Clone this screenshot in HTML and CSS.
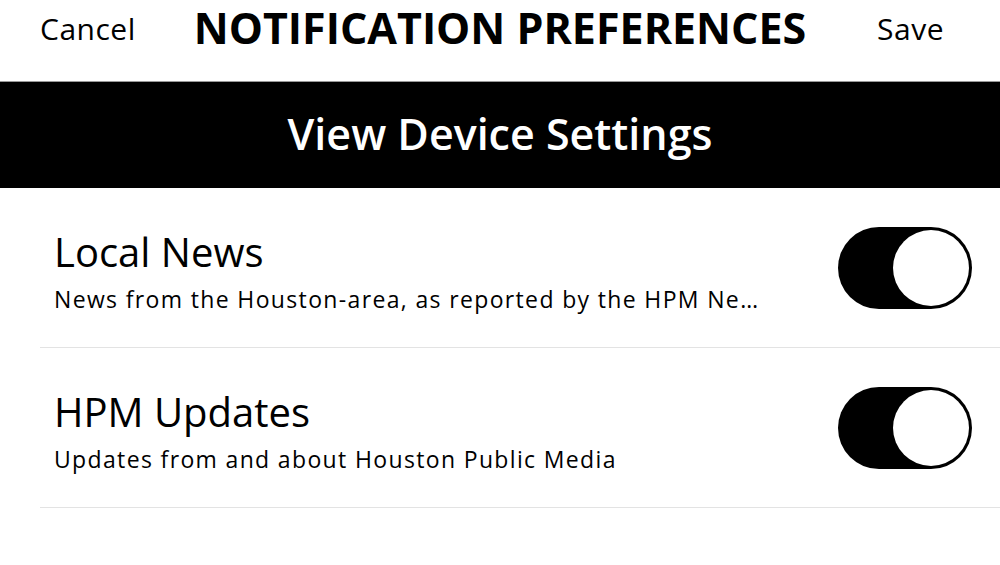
FILE: index.html
```html
<!DOCTYPE html>
<html>
<head>
<meta charset="utf-8">
<link rel="stylesheet" href="styles.css">
</head>
<body>
<header class="nav">
  <span class="nav-btn cancel">Cancel</span>
  <h1 class="nav-title">NOTIFICATION PREFERENCES</h1>
  <span class="nav-btn save">Save</span>
</header>
<div class="device-bar">View Device Settings</div>
<ul class="list">
  <li class="row">
    <div class="row-text">
      <div class="row-title">Local News</div>
      <div class="row-sub">News from the Houston-area, as reported by the HPM Ne…</div>
    </div>
    <div class="toggle on"><span class="knob"></span></div>
  </li>
  <li class="row">
    <div class="row-text">
      <div class="row-title">HPM Updates</div>
      <div class="row-sub">Updates from and about Houston Public Media</div>
    </div>
    <div class="toggle on"><span class="knob"></span></div>
  </li>
</ul>
</body>
</html>
```
FILE: styles.css
```css
* { box-sizing: border-box; }
html, body {
  margin: 0;
  padding: 0;
  background: #fff;
  color: #000;
  font-family: "Open Sans", Lato, sans-serif;
}
.nav {
  height: 81px;
  display: grid;
  grid-template-columns: 1fr auto 1fr;
  align-items: start;
  padding: 0 40px;
}
.nav-btn {
  font-size: 30px;
  font-weight: 400;
  letter-spacing: 0.5px;
  line-height: normal;
  margin-top: 8px;
}
.cancel { justify-self: start; }
.save { justify-self: end; margin-right: 16px; }
.nav-title {
  margin: -2px 0 0;
  font-size: 43px;
  font-weight: 700;
  line-height: normal;
  white-space: nowrap;
}
.device-bar {
  height: 107px;
  background: #000;
  border-top: 1px solid #999;
  color: #fff;
  font-size: 43px;
  font-weight: 600;
  display: flex;
  align-items: center;
  justify-content: center;
  padding-bottom: 4px;
}
.list {
  list-style: none;
  margin: 0;
  padding: 0 0 0 40px;
}
.row {
  height: 160px;
  border-bottom: 1px solid #e3e3e3;
  display: flex;
  align-items: center;
  justify-content: space-between;
  padding: 0 28px 0 14px;
}
.row-text { padding-top: 6px; }
.row-title {
  font-size: 40px;
  line-height: 48px;
}
.row-sub {
  font-size: 23px;
  line-height: 30px;
  letter-spacing: 1.35px;
  margin-top: 8px;
}
.toggle {
  width: 134px;
  height: 82px;
  border-radius: 41px;
  background: #000;
  position: relative;
  flex: none;
}
.knob {
  position: absolute;
  right: 3px;
  top: 3px;
  width: 76px;
  height: 76px;
  border-radius: 50%;
  background: #fff;
}
```
